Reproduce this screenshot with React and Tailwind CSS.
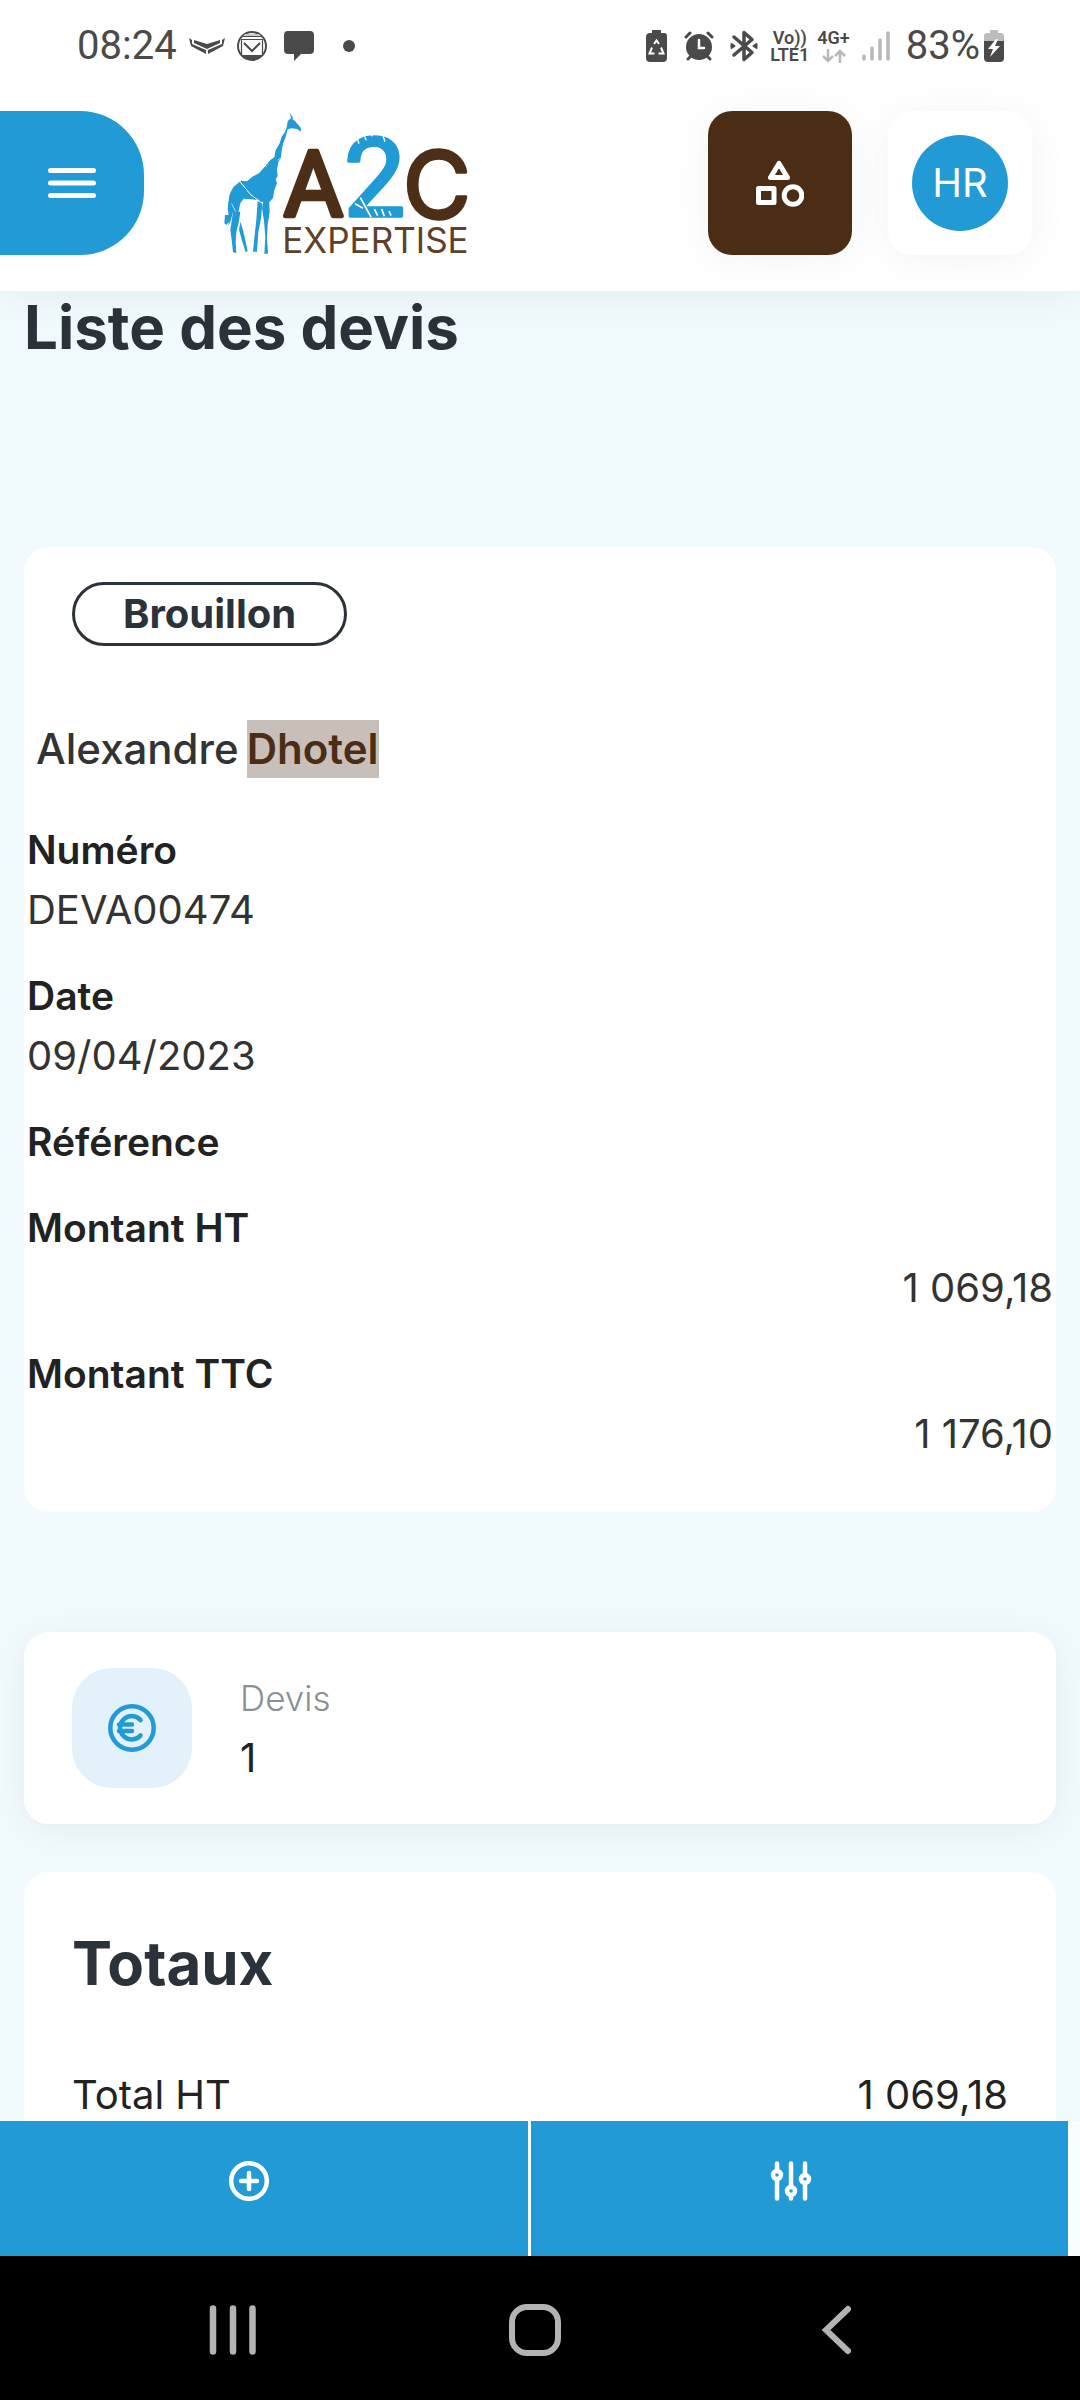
function MailIcon() {
  return (
    <svg viewBox="0 0 30 30" className="h-[30px] w-[30px]" fill="none">
      <circle cx="15" cy="15" r="14" fill="#fff" stroke="#4a4a4a" strokeWidth="2" />
      <path d="M8 3h14l2 2H6z" fill="#c9c9c9" />
      <path d="M4 24h22a14 14 0 0 1-22 0z" fill="#4a4a4a" />
      <path d="M5 5.500h20M4.500 8.500h21M4.500 8v16.500h21V8" stroke="#4a4a4a" strokeWidth="1.200" />
      <path d="M7 12l8 8 8-8" stroke="#4a4a4a" strokeWidth="2" />
    </svg>
  );
}

function WingsIcon() {
  return (
    <svg viewBox="0 0 36 16" className="h-4 w-9" fill="#4a4a4a">
      <path d="M5 2l13 4 13-4v3l-13 6L5 5z" />
      <path d="M0 0l3 2v4l14 6v4L2 8zM36 0l-3 2v4l-14 6v4l15-8z" />
    </svg>
  );
}

function ChatIcon() {
  return (
    <svg viewBox="0 0 30 30" className="h-[30px] w-[30px]" fill="#4a4a4a">
      <path d="M4 0h22q4 0 4 4v15q0 4-4 4h-9l-7 7v-7H4q-4 0-4-4V4q0-4 4-4z" />
    </svg>
  );
}

function RecycleBatteryIcon() {
  return (
    <svg viewBox="0 0 22 32" className="h-8 w-[22px]" fill="none">
      <path d="M6 0h9v3h3q3 0 3 3v22q0 4-4 4H4q-4 0-4-4V7q0-4 4-4h2z" fill="#4a4a4a" />
      <path d="M8 14l2.500-3.500L13 14M15 17.500l2.500 6h-5M8.500 23.500H3.500l2.500-6" stroke="#fff" strokeWidth="2" />
    </svg>
  );
}

function AlarmIcon() {
  return (
    <svg viewBox="0 0 30 30" className="h-[30px] w-[30px]" fill="none" strokeLinecap="round">
      <circle cx="15" cy="16" r="13" fill="#4a4a4a" />
      <path d="M2 6l4-4M28 6l-4-4M4 28l3-3M26 28l-3-3" stroke="#4a4a4a" strokeWidth="3" />
      <path d="M15 9v8h5" stroke="#fff" strokeWidth="2.500" />
    </svg>
  );
}

function BluetoothIcon() {
  return (
    <svg viewBox="0 0 28 32" className="h-8 w-7" fill="none" stroke="#4a4a4a" strokeWidth="3.500" strokeLinecap="round" strokeLinejoin="round">
      <path d="M4 7l18 15.500-8 7v-27l8 7L4 25" />
      <path d="M1.500 14l3 2-3 2zM26.500 14l-3 2 3 2z" fill="#4a4a4a" strokeWidth="2" />
    </svg>
  );
}

function DataIcon() {
  return (
    <svg viewBox="0 0 24 14" className="h-[14px] w-6" fill="none" stroke="#b8b8b8" strokeWidth="2.500">
      <path d="M6 0v12M1 7l5 5 5-5M18 14V2M13 7l5-5 5 5" />
    </svg>
  );
}

function SignalIcon() {
  return (
    <svg viewBox="0 0 28 30" className="h-[30px] w-7" stroke="#b8b8b8" strokeWidth="3.500" strokeLinecap="round">
      <path d="M2 25v3M10 17v11M18 9v19M26 2v26" />
    </svg>
  );
}

function ChargingBatteryIcon() {
  return (
    <svg viewBox="0 0 20 32" className="h-8 w-5">
      <path d="M6 0h8v3h3q3 0 3 3v5H0V6q0-3 3-3h3z" fill="#bdbdbd" />
      <path d="M0 11h20v17q0 4-4 4H4q-4 0-4-4z" fill="#4a4a4a" />
      <path d="M12 9L4 19h5l-3 8 10-11h-5l3-7z" fill="#fff" />
    </svg>
  );
}

function StatusBar() {
  return (
    <div className="flex h-[92px] items-center justify-between pr-[76px] pl-[77px] font-[Roboto,sans-serif] text-[40px] leading-none text-[#4a4a4a]">
      <div className="flex items-center">
        <span className="mr-3">08:24</span>
        <WingsIcon />
        <span className="mr-[17px] ml-3"><MailIcon /></span>
        <ChatIcon />
        <span className="ml-[29px] h-3 w-3 rounded-full bg-[#4a4a4a]" />
      </div>
      <div className="flex items-center">
        <RecycleBatteryIcon />
        <span className="mx-4"><AlarmIcon /></span>
        <BluetoothIcon />
        <span className="ml-3 flex flex-col items-center text-[18px] leading-[17px] font-semibold">
          <span>Vo))</span>
          <span>LTE1</span>
        </span>
        <span className="mr-3 ml-2 flex flex-col items-center gap-[3px] text-[18px] leading-[17px] font-semibold">
          <span>4G+</span>
          <DataIcon />
        </span>
        <SignalIcon />
        <span className="mr-1 ml-4">83%</span>
        <ChargingBatteryIcon />
      </div>
    </div>
  );
}

function Logo() {
  return (
    <svg viewBox="0 0 780 465" className="h-[155px] w-[260px]" role="img" aria-label="A2C Expertise">
      <g fill="#219ad6">
        <path d="M223 22l5 16 14 12 15 18 1 12-12-8-16-2-12 3-6 22-8 22-4 20-2 22-8 12-4 24 2 18-6 10 4 12-8 20-4 24-14 16-2-6-22 2-8-6-20-2-22-2-10 14-6 26 2 18-6 16-10-14-2-20-6 24-8 18 2-26-4-26 2-20 4-24 12-22 22-18 18 2 16-14 20-10 16-18 18-22 12-8 4-22 12-20 6-20 10-14 6-18 2-14 10-10 8 2z" />
        <path d="M54 320l22 0-4 28-8 34-2 30 2 32-10-2-4-38-4-30z" />
        <path d="M76 350l8 26 8 34 6 28-6 4-10-32-10-36z" />
        <path d="M128 288l14 8-4 44-8 42-4 58h-12l4-42 6-54z" />
        <path d="M146 284l16-2 2 38-6 40-2 40 3 46h-11l3-50-4-48-6-38z" />
        <path d="M30 330h14l-2 20-8 10-6-6z" />
      </g>
      <g stroke="#fff" strokeWidth="3" fill="none">
        <path d="M70 224l38 46 28 20" />
        <path d="M32 268l8 20M190 100l-12-4M150 168l10 10M176 132l-10-4M128 198l-8-10M156 186l-8-10M188 166l10-8M46 240l-4 30M62 320l-12-24" strokeWidth="2" />
      </g>
      <g fill="#4d2e17" stroke="#4d2e17" strokeLinejoin="round">
        <text x="206" y="332" fontFamily="Roboto" fontSize="272" fontWeight="400" strokeWidth="13">A</text>
        <text x="564" y="340" fontFamily="Inter" fontSize="278" fontWeight="400" strokeWidth="10">C</text>
      </g>
      <text x="386" y="332" fontFamily="Roboto" fontSize="330" fontWeight="400" fill="#219ad6" stroke="#219ad6" strokeWidth="10" strokeLinejoin="round">2</text>
      <g stroke="#fff" strokeWidth="4" fill="none">
        <path d="M424 92l8 24M444 84l10 22M502 86l8 24M470 82l2 12" />
        <path d="M436 278l32 58M420 296l24 14M478 312l10 20M500 312l8 22M522 318l6 14" strokeWidth="5" />
      </g>
      <text x="202" y="445" fontFamily="Inter" fontSize="105" fontWeight="400" fill="#5f4029">EXPERTISE</text>
    </svg>
  );
}

function Header() {
  return (
    <header className="relative z-10 shrink-0 bg-white shadow-[0_6px_42px_rgba(0,0,0,0.06)]">
      <StatusBar />
      <div className="flex h-[199px] items-start pt-[19px] pr-12">
        <button type="button" aria-label="Menu" className="flex h-36 w-36 items-center justify-center rounded-r-[64px] bg-[#219ad6]">
          <svg viewBox="0 0 48 30" className="h-[30px] w-12" stroke="#fff" strokeWidth="5" strokeLinecap="round">
            <path d="M2.500 2.500h43M2.500 15h43M2.500 27.500h43" />
          </svg>
        </button>
        <a href="#accueil" className="-mt-[6px] ml-[71px]"><Logo /></a>
        <div className="ml-auto flex gap-9">
          <button type="button" aria-label="Modules" className="flex h-36 w-36 items-center justify-center rounded-3xl bg-[#4b2d16] shadow-[0_4px_42px_rgba(0,0,0,0.05)]">
            <svg viewBox="0 0 48 48" className="h-12 w-12" fill="none" stroke="#fff" strokeWidth="5" strokeLinejoin="round">
              <path d="M23 4.500l-8.500 14h17z" />
              <path d="M2.500 29.500h15.500v14H2.500z" />
              <circle cx="37" cy="36.500" r="8.800" />
            </svg>
          </button>
          <button type="button" aria-label="Compte HR" className="flex h-36 w-36 items-center justify-center rounded-3xl bg-white shadow-[0_4px_42px_rgba(0,0,0,0.05)]">
            <span className="flex h-24 w-24 items-center justify-center rounded-full bg-[#219ad6] font-[Inter] text-[40px] text-white">HR</span>
          </button>
        </div>
      </div>
    </header>
  );
}

const fields = [
  { label: "Numéro", value: "DEVA00474" },
  { label: "Date", value: "09/04/2023" },
  { label: "Référence", value: "" },
  { label: "Montant HT", value: "1 069,18", amount: true },
  { label: "Montant TTC", value: "1 176,10", amount: true },
];

function QuoteCard() {
  return (
    <article className="rounded-3xl bg-white pt-[35px] pb-12">
      <span className="ml-12 inline-flex h-16 items-center rounded-full border-[3px] border-[#2c323a] px-12 text-[40px] font-bold text-[#2c323a]">
        Brouillon
      </span>
      <p className="mt-[74px] flex items-center pl-3 text-[42px] leading-[58px] text-[#333]">
        <span className="font-medium">Alexandre</span>
        <mark className="ml-[8px] bg-[#c9bfb9] font-semibold text-[#4b2d16]">Dhotel</mark>
      </p>
      <dl className="mt-[42px] flex flex-col gap-[26px] px-[3px] leading-[60px]">
        {fields.map((f) => (
          <div key={f.label}>
            <dt className="text-[39px] font-semibold text-[#222]">{f.label}</dt>
            {f.value && (
              <dd className={f.amount ? "text-right text-[40px] text-[#333]" : "text-[40px] text-[#333]"}>{f.value}</dd>
            )}
          </div>
        ))}
      </dl>
    </article>
  );
}

function CountCard() {
  return (
    <section className="mt-[120px] flex items-center gap-12 rounded-3xl bg-white px-12 py-9 shadow-[0_6px_42px_rgba(0,0,0,0.06)]">
      <div className="flex h-[120px] w-[120px] items-center justify-center rounded-[40px] bg-[#e3f2fa]">
        <svg viewBox="0 0 48 48" className="h-12 w-12" fill="none" stroke="#219ad6" strokeWidth="4.500" strokeLinecap="round">
          <circle cx="24" cy="24" r="21.700" />
          <path d="M32.500 16a11.700 11.700 0 1 0 0 15.500M11 20.500h13M11 27h13" />
        </svg>
      </div>
      <div className="leading-[60px]">
        <p className="text-[35px] font-light text-[#8a8f94]">Devis</p>
        <p className="text-[40px] text-[#222]">1</p>
      </div>
    </section>
  );
}

function TotalsCard() {
  return (
    <section className="relative mt-12 h-[480px] rounded-3xl bg-white px-12 pt-[55px]">
      <h2 className="text-[60px] leading-[72px] font-bold text-[#2c323a]">Totaux</h2>
      <div className="mt-[66px] flex justify-between text-[40px] leading-[60px] text-[#222]">
        <span>Total HT</span>
        <span>1 069,18</span>
      </div>
    </section>
  );
}

function ActionBar() {
  return (
    <div className="relative z-10 grid h-[135px] shrink-0 grid-cols-[528fr_537fr] gap-[3px] bg-[#f8fdff] pr-3">
      <button type="button" aria-label="Ajouter" className="flex items-start justify-center bg-[#219ad6] pt-10 pr-[30px]">
        <svg viewBox="0 0 40 40" className="h-10 w-10" fill="none" stroke="#fff" strokeWidth="4.500" strokeLinecap="round">
          <circle cx="20" cy="20" r="17.800" />
          <path d="M20 12v16M12 20h16" />
        </svg>
      </button>
      <button type="button" aria-label="Filtrer" className="flex items-start justify-center bg-[#219ad6] pt-10 pr-[18px]">
        <svg viewBox="0 0 42 40" className="h-10 w-[42px]" fill="none" stroke="#fff" strokeWidth="4.500" strokeLinecap="round">
          <path d="M7 2.500V10M7 18v19.500M21 2.500V26M21 34v3.500M35 2.500V14M35 22v15.500" />
          <circle cx="7" cy="14" r="4" />
          <circle cx="21" cy="30" r="4" />
          <circle cx="35" cy="18" r="4" />
        </svg>
      </button>
    </div>
  );
}

function SystemNav() {
  return (
    <nav className="grid h-36 shrink-0 grid-cols-3 items-center justify-items-center bg-black pt-1 pr-[92px] pl-[82px] text-[#b3b3b3]">
      <button type="button" aria-label="Applications récentes">
        <svg viewBox="0 0 50 52" className="h-[52px] w-[50px]" fill="none" stroke="currentColor" strokeWidth="6.500" strokeLinecap="round">
          <path d="M5 4.500v43M25 4.500v43M44.500 4.500v43" />
        </svg>
      </button>
      <button type="button" aria-label="Accueil">
        <svg viewBox="0 0 52 52" className="h-[52px] w-[52px]" fill="none" stroke="currentColor" strokeWidth="6">
          <rect x="3" y="3" width="46" height="46" rx="15" />
        </svg>
      </button>
      <button type="button" aria-label="Retour">
        <svg viewBox="0 0 32 52" className="h-[52px] w-8" fill="none" stroke="currentColor" strokeWidth="6" strokeLinecap="round">
          <path d="M27 5L5 26l22 21" />
        </svg>
      </button>
    </nav>
  );
}

export default function App() {
  return (
    <div className="flex h-screen flex-col overflow-hidden bg-[#f1fafc] font-[Inter,sans-serif]">
      <Header />
      <main className="min-h-0 flex-1 overflow-hidden px-6">
        <h1 className="mb-[184px] text-[60px] leading-[72px] font-bold text-[#2c323a]">Liste des devis</h1>
        <QuoteCard />
        <CountCard />
        <TotalsCard />
      </main>
      <ActionBar />
      <SystemNav />
    </div>
  );
}
